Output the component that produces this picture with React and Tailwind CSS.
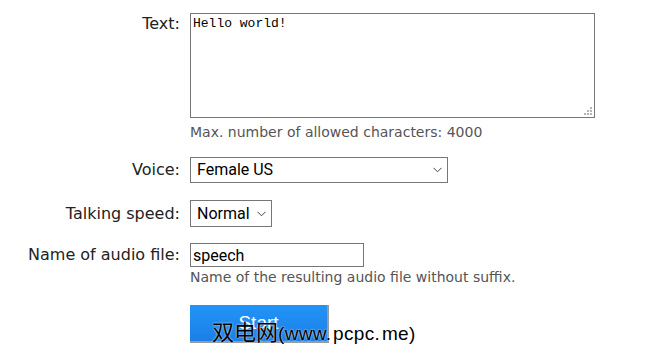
import React from 'react';

const Chevron = () => (
  <svg className="pointer-events-none absolute right-[6px] top-1/2 -translate-y-1/2" width="9" height="6" viewBox="0 0 9 6">
    <path d="M0.5 0.8 L4.5 4.8 L8.5 0.8" fill="none" stroke="#444" strokeWidth="1" />
  </svg>
);

// dotted resize grip in the textarea corner
const Grip = () => (
  <svg className="pointer-events-none absolute right-[3px] bottom-[3px]" width="8" height="8" viewBox="0 0 8 8" fill="#b4b4b4">
    <rect x="6" y="0" width="2" height="2" />
    <rect x="3" y="3" width="2" height="2" />
    <rect x="6" y="3" width="2" height="2" />
    <rect x="0" y="6" width="2" height="2" />
    <rect x="3" y="6" width="2" height="2" />
    <rect x="6" y="6" width="2" height="2" />
  </svg>
);

const App = () => {
  const label = "text-right text-[16px] text-[#222] font-['DejaVu_Sans',sans-serif]";
  const hint = "text-[14px] text-[#555] font-['DejaVu_Sans',sans-serif]";
  const control = "font-['Roboto','Noto_Sans',sans-serif] text-[16px] text-black bg-white border border-[#767676]";

  return (
    <main className="w-[670px] h-[357px] bg-white overflow-hidden">
      <div className="grid grid-cols-[180px_1fr] gap-x-[10px] pt-[13px]">
        {/* Text */}
        <div className={`${label} leading-[22px]`}>Text:</div>
        <div>
          <div className="relative w-[405px]">
            <textarea
              defaultValue="Hello world!"
              className="block w-[405px] h-[105px] border border-[#767676] px-[2px] py-[2px] font-['Liberation_Mono',monospace] text-[13px] leading-[16px] text-black resize-none outline-none"
            />
            <Grip />
          </div>
          <div className={`${hint} mt-[6px] leading-[16px]`}>Max. number of allowed characters: 4000</div>
        </div>

        {/* Voice */}
        <div className={`${label} mt-[17px] leading-[26px]`}>Voice:</div>
        <div className="mt-[17px]">
          <div className="relative w-[258px] h-[26px]">
            <select defaultValue="f-us" className={`${control} appearance-none w-full h-full pl-[6px] leading-[24px] outline-none`}>
              <option value="f-us">Female US</option>
              <option value="m-us">Male US</option>
            </select>
            <Chevron />
          </div>
        </div>

        {/* Speed */}
        <div className={`${label} mt-[17px] leading-[27px]`}>Talking speed:</div>
        <div className="mt-[17px]">
          <div className="relative w-[82px] h-[27px]">
            <select defaultValue="normal" className={`${control} appearance-none w-full h-full pl-[6px] leading-[25px] outline-none`}>
              <option value="slow">Slow</option>
              <option value="normal">Normal</option>
              <option value="fast">Fast</option>
            </select>
            <Chevron />
          </div>
        </div>

        {/* Audio file name */}
        <div className={`${label} mt-[16px] leading-[24px]`}>Name of audio file:</div>
        <div className="mt-[16px]">
          <input
            defaultValue="speech"
            className={`${control} block w-[174px] h-[24px] px-[2px] leading-[22px] outline-none`}
          />
          <div className={`${hint} mt-[2px] leading-[16px]`}>Name of the resulting audio file without suffix.</div>
        </div>

        {/* Start */}
        <div />
        <div className="mt-[20px] relative">
          <button className="w-[139px] h-[38px] bg-gradient-to-b from-[#2294f8] to-[#1b7fe6] border-b-2 border-r-2 border-[#9a9a9a] text-white text-[19px] font-['Liberation_Sans',sans-serif]">
            Start
          </button>
          <div className="absolute left-[22px] top-[12px] text-[22px] leading-[26px] text-black whitespace-nowrap font-['Noto_Sans_CJK_SC','Liberation_Sans',sans-serif] [text-shadow:0_0_2px_#fff]">
            双电网<span className="font-['Liberation_Sans',sans-serif] text-[19px] tracking-[0.3px]">(www.&#8202;pcpc.&#8202;me)</span>
          </div>
        </div>
      </div>
    </main>
  );
};

export default App;
